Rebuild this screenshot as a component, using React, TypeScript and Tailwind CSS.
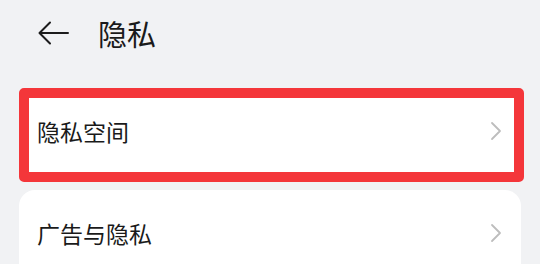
import React from "react";

function Chevron() {
  return (
    <svg width="12" height="20" viewBox="0 0 12 20" fill="none">
      <path d="M2 2l8 8-8 8" stroke="#bdbdbd" strokeWidth="1.8" strokeLinecap="round" strokeLinejoin="round" />
    </svg>
  );
}

export default function App() {
  return (
    <div
      className="w-[540px] h-[264px] overflow-hidden bg-[#f1f2f4]"
      style={{ fontFamily: '"Noto Sans CJK SC", "Noto Sans", sans-serif' }}
    >
      <div className="h-[88px] flex items-start pt-[16px] pl-[38px]">
        <div className="flex items-center h-[34px] gap-[28px]">
          <svg width="32" height="24" viewBox="0 0 32 24" fill="none">
            <path d="M30 12H2M12 1.5L1.5 12 12 22.5" stroke="#1c1c1c" strokeWidth="2" strokeLinecap="round" strokeLinejoin="round" />
          </svg>
          <span className="text-[29px] leading-none font-normal text-[#1a1a1a]">隐私</span>
        </div>
      </div>
      <div className="pl-[19px] pr-[16px] flex flex-col gap-[8px]">
        <div className="h-[94px] bg-white border-[10px] border-[#f4363a] rounded-[5px] flex items-center justify-between pl-[8px] pr-[12px] pb-[8px]">
          <span className="text-[23px] text-[#1a1a1a]">隐私空间</span>
          <Chevron />
        </div>
        <div className="h-[94px] mr-[3px] bg-white rounded-[16px] flex items-center justify-between pl-[18px] pr-[19px] pb-[8px]">
          <span className="text-[23px] text-[#1a1a1a]">广告与隐私</span>
          <Chevron />
        </div>
      </div>
    </div>
  );
}
